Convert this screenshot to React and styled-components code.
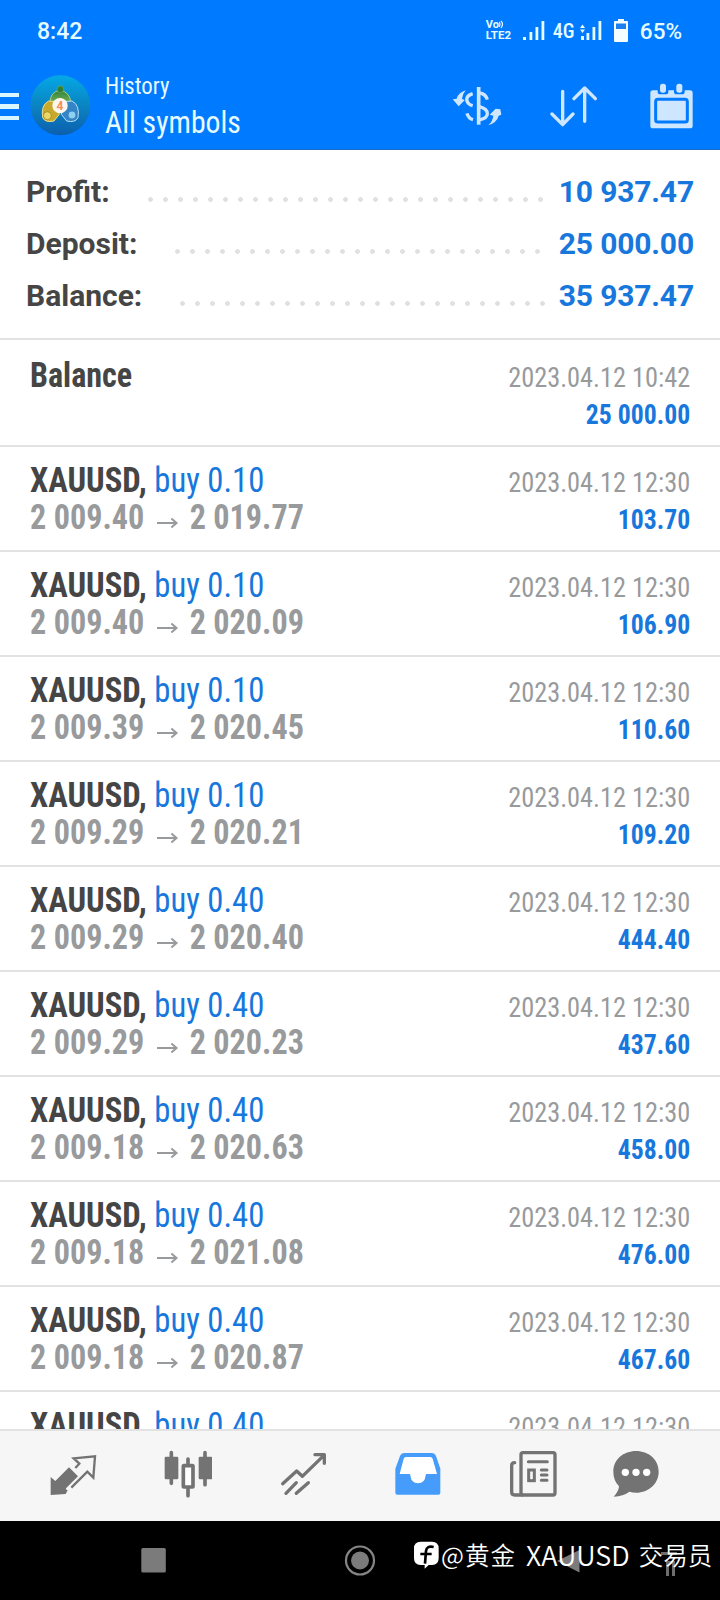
import React, { Fragment } from 'react';
import styled, { createGlobalStyle } from 'styled-components';

const GlobalStyle = createGlobalStyle`
  * {
    box-sizing: border-box;
  }

  body {
    margin: 0;
    background: #fff;
    font-family: Roboto, "Noto Sans CJK SC", sans-serif;
  }

  svg {
    display: block;
    flex: none;
  }
`;

const condensed = `
  font-family: "Roboto Condensed", Roboto, sans-serif;
  font-stretch: 75%;
`;

const Screen = styled.div`
  display: flex;
  flex-direction: column;
  width: 720px;
  height: 1600px;
  overflow: hidden;
  background: #fff;
`;

const HeaderWrapper = styled.header`
  flex: none;
  height: 150px;
  background: #007aff;
  border-bottom: 1px solid #1a6cc4;
  color: #e6fbff;
`;

const StatusBar = styled.div`
  display: flex;
  align-items: center;
  height: 62px;
  padding: 0 38px 0 37px;
`;

const Clock = styled.span`
  margin-right: auto;
  font-size: 23px;
  font-weight: 500;
`;

const VoLte = styled.div`
  width: 25px;
  margin: -2px 12px 0 0;
  font-weight: 700;
  white-space: nowrap;
`;

const VoLine = styled.div`
  display: flex;
  font-size: 11px;
  line-height: 10px;
`;

const LteLine = styled.div`
  font-size: 11.5px;
  line-height: 10px;
`;

const NetworkType = styled.span`
  ${condensed}
  width: 21px;
  margin: 0 6px 0 8px;
  font-size: 20px;
  font-weight: 500;
`;

const Percent = styled.span`
  margin-left: 12px;
  font-size: 22.5px;
  font-weight: 500;
`;

const TitleBar = styled.div`
  display: flex;
  align-items: center;
  height: 87px;
  padding-right: 26px;
`;

const MenuButton = styled.div`
  display: flex;
  flex-direction: column;
  gap: 7px;
  width: 19px;
  margin: 2px 11px 0 0;
`;

const MenuLine = styled.i`
  height: 4.5px;
  background: #d9f6ff;
`;

const Titles = styled.div`
  ${condensed}
  margin-left: 14px;
  margin-right: auto;
  white-space: nowrap;
  transform: scaleX(0.95);
  transform-origin: left;
`;

const SubTitle = styled.div`
  font-size: 24px;
  line-height: 34px;
`;

const MainTitle = styled.div`
  font-size: 31.3px;
  line-height: 40px;
`;

const Actions = styled.div`
  display: flex;
  align-items: center;
  gap: 47px;
`;

const SortButton = styled.div`
  margin-right: 5px;
`;

const Summary = styled.section`
  flex: none;
  height: 190px;
  padding: 15px 26px 0;
  border-bottom: 2px solid #e2e2e2;
`;

const SummaryRow = styled.div`
  display: flex;
  height: 52px;
  line-height: 53px;
  font-size: 30px;
  font-weight: 700;
  white-space: nowrap;
`;

const SummaryLabel = styled.span`
  color: #454545;
`;

const Dots = styled.span`
  flex: 1;
  height: 5px;
  margin: 32px 11px 0 33px;
  background: radial-gradient(circle at 7.5px 2.5px, #e0e0e0 2px, transparent 2.7px) 0 0 / 15px 5px repeat-x;
`;

const SummaryValue = styled.span`
  color: #1877dc;
  letter-spacing: -0.15px;
`;

const DealList = styled.main`
  flex: 1;
  min-height: 0;
  padding-top: 2px;
  overflow: hidden;
`;

const DealRow = styled.div`
  display: flex;
  justify-content: space-between;
  height: 105px;
  padding: 15px 30px 0;
  border-bottom: 2px solid #e2e2e2;
  line-height: 37px;
  white-space: nowrap;
  ${condensed}
`;

const DealInfo = styled.div`
  font-size: 34.7px;
`;

const DealMeta = styled.div`
  padding-top: 2px;
  font-size: 27.5px;
  text-align: right;
`;

const DealTitle = styled.div`
  transform: scaleX(${(props) => props.$squeeze || 0.941});
  transform-origin: left;
`;

const Symbol = styled.span`
  color: #454545;
  font-weight: 700;
`;

const Side = styled.span`
  color: #1877dc;
`;

const Prices = styled.div`
  display: flex;
  color: #989a9c;
  font-weight: 700;
  transform: scaleX(0.927);
  transform-origin: left;
`;

const DealDate = styled.div`
  color: #989a9c;
  transform: scaleX(0.957);
  transform-origin: right;
`;

const DealValue = styled.div`
  color: #1877dc;
  font-weight: 700;
  transform: scaleX(0.935);
  transform-origin: right;
`;

const TabBar = styled.nav`
  display: grid;
  grid-template-columns: repeat(5, 115px) 92px;
  flex: none;
  height: 92px;
  padding: 0 0 4px 15px;
  border-top: 2px solid #e2e2e2;
  background: #f6f6f6;
`;

const Tab = styled.div`
  display: flex;
  align-items: center;
  justify-content: center;
  color: ${(props) => (props.$active ? '#459cfb' : '#737373')};
`;

const SystemNav = styled.footer`
  position: relative;
  flex: none;
  height: 79px;
  background: #000;
`;

const NavButtons = styled.div`
  display: flex;
  align-items: center;
  height: 78px;
  padding-left: 141px;
`;

const Watermark = styled.div`
  position: absolute;
  top: 13px;
  left: 414px;
  display: flex;
  align-items: center;
  height: 42px;
  color: #fff;
  font-family: "Noto Sans CJK SC", sans-serif;
  font-size: 24.5px;
  font-weight: 350;
  line-height: 38px;
  white-space: nowrap;
`;

const WatermarkAt = styled.span`
  margin-left: 2px;
  letter-spacing: 1px;
`;

const WatermarkName = styled.span`
  margin: 0 9px 0 10px;
  font-size: 27px;
`;

const summary = [
  { label: 'Profit:', value: '10 937.47' },
  { label: 'Deposit:', value: '25 000.00' },
  { label: 'Balance:', value: '35 937.47' },
];

const deals = [
  { volume: '0.10', open: '2 009.40', close: '2 019.77', profit: '103.70' },
  { volume: '0.10', open: '2 009.40', close: '2 020.09', profit: '106.90' },
  { volume: '0.10', open: '2 009.39', close: '2 020.45', profit: '110.60' },
  { volume: '0.10', open: '2 009.29', close: '2 020.21', profit: '109.20' },
  { volume: '0.40', open: '2 009.29', close: '2 020.40', profit: '444.40' },
  { volume: '0.40', open: '2 009.29', close: '2 020.23', profit: '437.60' },
  { volume: '0.40', open: '2 009.18', close: '2 020.63', profit: '458.00' },
  { volume: '0.40', open: '2 009.18', close: '2 021.08', profit: '476.00' },
  { volume: '0.40', open: '2 009.18', close: '2 020.87', profit: '467.60' },
  { volume: '0.40', open: '2 009.18', close: '2 020.87', profit: '467.60' },
];

const SignalIcon = ({ arrows }) => (
  <svg width="22" height="20" viewBox="0 0 22 20" fill="currentColor">
    {arrows ? (
      <Fragment>
        <path d="M2.5 3.5 5 7H0zM2.5 12 5 8.5H0zM1 15h3v4H1z" />
        <path d="M6.500 12h2.800v7H6.500zM12.500 6h2.800v13h-2.800zM18.500 0h2.800v19h-2.800z" />
      </Fragment>
    ) : (
      <path d="M0 16h3v3H0zM6.500 11h2.800v8H6.500zM12.500 6h2.800v13h-2.800zM18.500 0h2.800v19h-2.800z" />
    )}
  </svg>
);

const BatteryWrapper = styled.div`
  margin: -2px 0 0 12px;
`;

const BatteryIcon = () => (
  <svg width="14" height="23" viewBox="0 0 14 23">
    <path d="M4 0h6v2h3a1 1 0 0 1 1 1v19a1 1 0 0 1-1 1H1a1 1 0 0 1-1-1V3a1 1 0 0 1 1-1h3z" fill="#f4fdff" />
    <path d="M2 4.500h10V10H2z" fill="#1c7fee" />
  </svg>
);

const AppLogo = () => (
  <svg width="61" height="61" viewBox="0 0 183 183">
    <defs>
      <linearGradient id="sky" x1="0" y1="0" x2="0" y2="1">
        <stop offset="0" stopColor="#05a8e6" />
        <stop offset="0.5" stopColor="#0b84c2" />
        <stop offset="1" stopColor="#0c5fae" />
      </linearGradient>
      <linearGradient id="green" x1="0" y1="0" x2="0" y2="1">
        <stop offset="0" stopColor="#2f7f3a" />
        <stop offset="1" stopColor="#7fb85c" />
      </linearGradient>
    </defs>
    <circle cx="91" cy="91" r="90" fill="url(#sky)" />
    <path d="M60 82q0-22 17-32l13-5 13 5q18 10 19 32l-8 8H68z" fill="url(#green)" stroke="#a9cf88" strokeWidth="3" />
    <circle cx="91" cy="43" r="10" fill="#2f8035" stroke="#6faa58" strokeWidth="2" />
    <path d="M38 128q-6-38 18-50l22 2 10 38-16 20q-26 6-34-10z" fill="#c9a92c" stroke="#ecdf92" strokeWidth="3" />
    <circle cx="52" cy="122" r="12" fill="#ecd765" stroke="#8f7718" strokeWidth="2" />
    <path d="M144 128q6-38-18-50l-22 2-10 38 16 20q26 6 34-10z" fill="#3385c8" stroke="#b5e1f7" strokeWidth="3" />
    <circle cx="126" cy="120" r="12" fill="#8ed0f2" stroke="#276faf" strokeWidth="2" />
    <circle cx="90" cy="92" r="23" fill="#fdf6ee" />
    <text x="90" y="105" textAnchor="middle" fontSize="36" fontWeight="700" fill="#f0905a">4</text>
  </svg>
);

const CurrencyIcon = () => (
  <svg width="53" height="43" viewBox="0 0 159 129" fill="none" stroke="#cfe6ff" strokeWidth="10">
    <path d="M8 46l12-2q5-18 27-25-10 12-11 25l8 5-18 18z" fill="#cfe6ff" stroke="none" />
    <path d="M154 92l-8 3q-5 20-31 29 13-12 15-29l-11-3 18-18 14 2z" fill="#cfe6ff" stroke="none" />
    <path d="M86 9v113" strokeWidth="11" />
    <path d="M68 29q-27 9-13 29 5 5 13 7M51 88q4 15 18 19M88 27q19 2 24 20M88 68q24 6 24 21 0 13-24 19" />
  </svg>
);

const SortIcon = () => (
  <svg width="47" height="43" viewBox="0 0 141 129" fill="none" stroke="#cfe6ff" strokeWidth="10" strokeLinecap="round" strokeLinejoin="round">
    <path d="M38 22v98M6 90l32 32 31-32M104 112V14M72 44l32-32 32 32" />
  </svg>
);

const CalendarIcon = () => (
  <svg width="45" height="46" viewBox="0 0 135 138">
    <rect x="4" y="22" width="127" height="114" rx="8" fill="#cfe6ff" />
    <path d="M26 0h32v26q0 8-8 8H34q-8 0-8-8zM75 0h32v26q0 8-8 8H83q-8 0-8-8z" fill="#007aff" />
    <rect x="33" y="2" width="18" height="27" rx="8" fill="#cfe6ff" />
    <rect x="82" y="2" width="18" height="27" rx="8" fill="#cfe6ff" />
    <rect x="20" y="49" width="95" height="68" rx="7" fill="#cfe6ff" stroke="#007aff" strokeWidth="9" />
  </svg>
);

const TradeIcon = () => (
  <svg width="48" height="48" viewBox="0 0 144 144">
    <path d="M79 54 91 41 74 25l64-6-5 64-18-18-48 48" fill="none" stroke="currentColor" strokeWidth="7" />
    <path d="M60 52l27 27-36 36q-2 4 5 6l-6 11-45 3V81l14 12z" fill="currentColor" />
  </svg>
);

const ChartIcon = () => (
  <svg width="48" height="48" viewBox="0 0 144 144" fill="currentColor">
    <rect x="2" y="20" width="41" height="68" rx="4" />
    <rect x="104" y="20" width="41" height="68" rx="4" />
    <path d="M22 8v92M123 8v96M72 27v110" stroke="currentColor" strokeWidth="11" strokeLinecap="round" />
    <rect x="58" y="47" width="29" height="64" rx="2" fill="#fff" stroke="currentColor" strokeWidth="11" />
  </svg>
);

const TrendIcon = () => (
  <svg width="48" height="48" viewBox="0 0 144 144" fill="none" stroke="currentColor" strokeWidth="10" strokeLinecap="round" strokeLinejoin="round">
    <path d="M11 101l42-38 17 16 64-62M108 14h28v26M21 130l31-32M52 130l36-32" />
  </svg>
);

const InboxIcon = () => (
  <svg width="48" height="48" viewBox="0 0 144 144">
    <path d="M31 9h82q9 0 13 9l13 38v72q0 6-6 6H10q-6 0-6-6V56l14-38q4-9 13-9z" fill="currentColor" />
    <path d="M35 21h74q5 0 7 5l13 46H98q-3 0-3 4-2 24-23 24T49 76q0-4-3-4H17l12-46q2-5 6-5z" fill="#fff" />
  </svg>
);

const NewsIcon = () => (
  <svg width="48" height="48" viewBox="0 0 144 144" fill="none" stroke="currentColor" strokeWidth="10" strokeLinecap="round">
    <rect x="36" y="8" width="102" height="127" rx="6" />
    <path d="M17 38q-9 0-9 9v79q0 9 9 9h22" />
    <path d="M58 35h57M97 60h17M97 75h17M97 91h17" strokeWidth="9" />
    <rect x="59" y="60" width="17" height="32" strokeWidth="9" />
  </svg>
);

const ChatIcon = () => (
  <svg width="48" height="48" viewBox="0 0 144 144">
    <path d="M72 3c38 0 68 26 68 62s-30 63-68 63q-10 0-20-3-18 14-47 15 15-15 16-31Q4 91 4 65C4 29 34 3 72 3z" fill="currentColor" />
    <circle cx="40" cy="67" r="11" fill="#fff" />
    <circle cx="72" cy="67" r="11" fill="#fff" />
    <circle cx="104" cy="67" r="11" fill="#fff" />
  </svg>
);

const NavIcons = () => (
  <svg width="540" height="34" viewBox="0 0 540 34" overflow="visible">
    <rect x="0.300" y="5" width="24.500" height="24.500" rx="1.500" fill="#7b7b7b" />
    <circle cx="219" cy="17.500" r="14" fill="none" stroke="#858585" strokeWidth="2.200" />
    <circle cx="219" cy="17.500" r="9" fill="#7b7b7b" />
    <path d="M416 18l22.500-11v22.500z" fill="#7b7b7b" />
    <path d="M520 10.500h16M526.500 19v14M532.500 19v14M525 19.500h9" stroke="#6d6d6d" strokeWidth="3" />
  </svg>
);

const WatermarkLogo = () => (
  <svg width="25" height="28" viewBox="0 0 75 84">
    <path d="M20 2h34q20 0 20 20v30q0 20-20 20H44L32 83V72H20Q0 72 0 52V22Q0 2 20 2z" fill="#fff" />
    <path d="M59 18q-21-5-23 12l-3 38M19 39h34" fill="none" stroke="#000" strokeWidth="8" />
  </svg>
);

const tabs = [
  { name: 'trade', Icon: TradeIcon },
  { name: 'chart', Icon: ChartIcon },
  { name: 'trend', Icon: TrendIcon },
  { name: 'inbox', Icon: InboxIcon, active: true },
  { name: 'news', Icon: NewsIcon },
  { name: 'chat', Icon: ChatIcon },
];

const PriceArrow = styled.svg`
  margin: 18px 12px 0 14px;
`;

const Header = () => (
  <HeaderWrapper>
    <StatusBar>
      <Clock>8:42</Clock>
      <VoLte>
        <VoLine>
          Vo
          <svg width="6" height="9" viewBox="0 0 6 9" fill="none" stroke="currentColor" strokeWidth="1.2">
            <path d="M0 2q2 2 0 5M2 1q3 3 0 7" />
          </svg>
        </VoLine>
        <LteLine>LTE2</LteLine>
      </VoLte>
      <SignalIcon />
      <NetworkType>4G</NetworkType>
      <SignalIcon arrows />
      <BatteryWrapper>
        <BatteryIcon />
      </BatteryWrapper>
      <Percent>65%</Percent>
    </StatusBar>
    <TitleBar>
      <MenuButton>
        <MenuLine />
        <MenuLine />
        <MenuLine />
      </MenuButton>
      <AppLogo />
      <Titles>
        <SubTitle>History</SubTitle>
        <MainTitle>All symbols</MainTitle>
      </Titles>
      <Actions>
        <CurrencyIcon />
        <SortButton>
          <SortIcon />
        </SortButton>
        <CalendarIcon />
      </Actions>
    </TitleBar>
  </HeaderWrapper>
);

const Deal = ({ deal }) => (
  <DealRow>
    <DealInfo>
      <DealTitle>
        <Symbol>XAUUSD,</Symbol> <Side>buy {deal.volume}</Side>
      </DealTitle>
      <Prices>
        {deal.open}
        <PriceArrow width="23" height="12" viewBox="0 0 23 12" fill="none" stroke="#989a9c" strokeWidth="2.2">
          <path d="M0 6h21M15.500 1.500l5.500 4.500-5.500 4.500" />
        </PriceArrow>
        {deal.close}
      </Prices>
    </DealInfo>
    <DealMeta>
      <DealDate>2023.04.12 12:30</DealDate>
      <DealValue>{deal.profit}</DealValue>
    </DealMeta>
  </DealRow>
);

const App = () => (
  <Fragment>
    <GlobalStyle />
    <Screen>
      <Header />
      <Summary>
        {summary.map((item) => (
          <SummaryRow key={item.label}>
            <SummaryLabel>{item.label}</SummaryLabel>
            <Dots />
            <SummaryValue>{item.value}</SummaryValue>
          </SummaryRow>
        ))}
      </Summary>
      <DealList>
        <DealRow>
          <DealInfo>
            <DealTitle $squeeze={0.925}>
              <Symbol>Balance</Symbol>
            </DealTitle>
          </DealInfo>
          <DealMeta>
            <DealDate>2023.04.12 10:42</DealDate>
            <DealValue>25 000.00</DealValue>
          </DealMeta>
        </DealRow>
        {deals.map((deal, index) => (
          <Deal key={index} deal={deal} />
        ))}
      </DealList>
      <TabBar>
        {tabs.map(({ name, Icon, active }) => (
          <Tab key={name} $active={active}>
            <Icon />
          </Tab>
        ))}
      </TabBar>
      <SystemNav>
        <NavButtons>
          <NavIcons />
        </NavButtons>
        <Watermark>
          <WatermarkLogo />
          <WatermarkAt>@黄金</WatermarkAt>
          <WatermarkName>XAUUSD</WatermarkName>
          <span>交易员</span>
        </Watermark>
      </SystemNav>
    </Screen>
  </Fragment>
);

export default App;
